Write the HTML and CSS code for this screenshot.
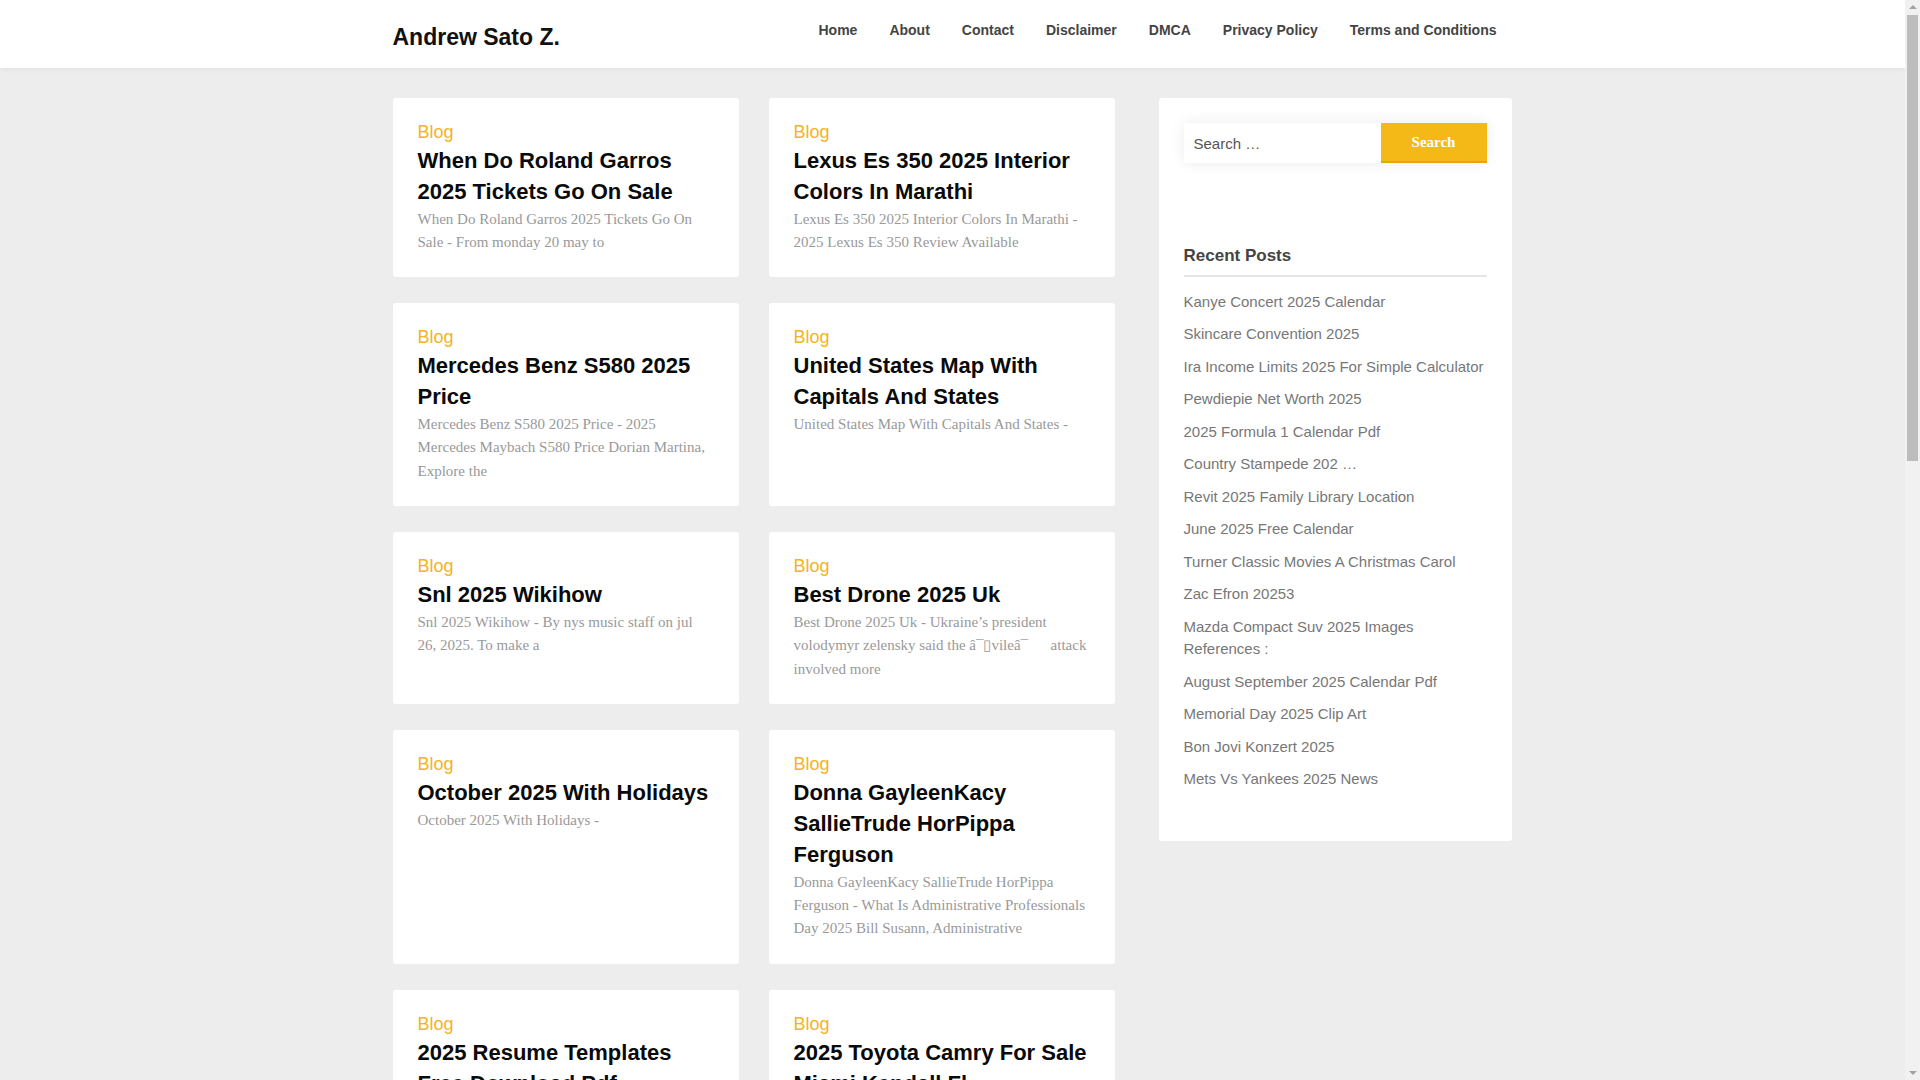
FILE: index.html
```html
<!DOCTYPE html>
<html lang="en">
<head>
<meta charset="utf-8">
<title>Andrew Sato Z.</title>
<link rel="stylesheet" href="styles.css">
</head>
<body>
<header class="site-header">
  <div class="container header-inner">
    <a class="logo" href="#">Andrew Sato Z.</a>
    <nav class="main-nav">
      <ul>
        <li><a href="#">Home</a></li>
        <li><a href="#">About</a></li>
        <li><a href="#">Contact</a></li>
        <li><a href="#">Disclaimer</a></li>
        <li><a href="#">DMCA</a></li>
        <li><a href="#">Privacy Policy</a></li>
        <li><a href="#">Terms and Conditions</a></li>
      </ul>
    </nav>
  </div>
</header>

<div class="container site-content">
  <main class="posts">
    <article class="card">
      <a class="cat" href="#">Blog</a>
      <h2 class="title">When Do Roland Garros 2025 Tickets Go On Sale</h2>
      <p class="excerpt">When Do Roland Garros 2025 Tickets Go On Sale - From monday 20 may to</p>
    </article>
    <article class="card">
      <a class="cat" href="#">Blog</a>
      <h2 class="title">Lexus Es 350 2025 Interior Colors In Marathi</h2>
      <p class="excerpt">Lexus Es 350 2025 Interior Colors In Marathi - 2025 Lexus Es 350 Review Available</p>
    </article>
    <article class="card">
      <a class="cat" href="#">Blog</a>
      <h2 class="title">Mercedes Benz S580 2025 Price</h2>
      <p class="excerpt">Mercedes Benz S580 2025 Price - 2025 Mercedes Maybach S580 Price Dorian Martina, Explore the</p>
    </article>
    <article class="card">
      <a class="cat" href="#">Blog</a>
      <h2 class="title">United States Map With Capitals And States</h2>
      <p class="excerpt">United States Map With Capitals And States -</p>
    </article>
    <article class="card">
      <a class="cat" href="#">Blog</a>
      <h2 class="title">Snl 2025 Wikihow</h2>
      <p class="excerpt">Snl 2025 Wikihow - By nys music staff on jul 26, 2025. To make a</p>
    </article>
    <article class="card">
      <a class="cat" href="#">Blog</a>
      <h2 class="title">Best Drone 2025 Uk</h2>
      <p class="excerpt">Best Drone 2025 Uk - Ukraine’s president volodymyr zelensky said the â¯▯vileâ¯&emsp;&ensp;attack involved more</p>
    </article>
    <article class="card">
      <a class="cat" href="#">Blog</a>
      <h2 class="title">October 2025 With Holidays</h2>
      <p class="excerpt">October 2025 With Holidays -</p>
    </article>
    <article class="card">
      <a class="cat" href="#">Blog</a>
      <h2 class="title">Donna GayleenKacy SallieTrude HorPippa Ferguson</h2>
      <p class="excerpt">Donna GayleenKacy SallieTrude HorPippa Ferguson - What Is Administrative Professionals Day 2025 Bill Susann, Administrative</p>
    </article>
    <article class="card">
      <a class="cat" href="#">Blog</a>
      <h2 class="title">2025 Resume Templates Free Download Pdf</h2>
      <p class="excerpt">2025 Resume Templates Free Download Pdf - Free resume templates to download in word and pdf</p>
    </article>
    <article class="card">
      <a class="cat" href="#">Blog</a>
      <h2 class="title">2025 Toyota Camry For Sale Miami Kendall Fl</h2>
      <p class="excerpt">2025 Toyota Camry For Sale Miami Kendall Fl - New 2025 toyota camry for sale in</p>
    </article>
    <article class="card">
      <a class="cat" href="#">Blog</a>
      <h2 class="title">Easter 2025 Date Uk</h2>
      <p class="excerpt">Easter 2025 Date Uk - Easter sunday falls on 20 april in 2025, which means</p>
    </article>
    <article class="card">
      <a class="cat" href="#">Blog</a>
      <h2 class="title">Nfl Draft 2025 Mock Draft</h2>
      <p class="excerpt">Nfl Draft 2025 Mock Draft - The 2025 nfl draft is set to take place</p>
    </article>
    <article class="card">
      <a class="cat" href="#">Blog</a>
      <h2 class="title">Chinese New Year 2025 Animal</h2>
      <p class="excerpt">Chinese New Year 2025 Animal - The year of the snake begins on january 29</p>
    </article>
    <article class="card">
      <a class="cat" href="#">Blog</a>
      <h2 class="title">Honda Civic 2025 Price In Pakistan</h2>
      <p class="excerpt">Honda Civic 2025 Price In Pakistan - Latest prices and variants of the</p>
    </article>
    <article class="card">
      <a class="cat" href="#">Blog</a>
      <h2 class="title">Spring Break 2025 Dates Florida</h2>
      <p class="excerpt">Spring Break 2025 Dates Florida - Most schools in florida take their break in</p>
    </article>
    <article class="card">
      <a class="cat" href="#">Blog</a>
      <h2 class="title">Toyota Tacoma 2025 Release Date</h2>
      <p class="excerpt">Toyota Tacoma 2025 Release Date - The new tacoma arrives at dealers this</p>
    </article>
    <article class="card">
      <a class="cat" href="#">Blog</a>
      <h2 class="title">Ford Bronco 2025 Colors</h2>
      <p class="excerpt">Ford Bronco 2025 Colors - Explore the full palette of exterior paint options</p>
    </article>
    <article class="card">
      <a class="cat" href="#">Blog</a>
      <h2 class="title">Memorial Day Weekend 2025 Events</h2>
      <p class="excerpt">Memorial Day Weekend 2025 Events - Parades, concerts and fireworks across the</p>
    </article>
    <article class="card">
      <a class="cat" href="#">Blog</a>
      <h2 class="title">Taylor Swift Tour Dates 2025</h2>
      <p class="excerpt">Taylor Swift Tour Dates 2025 - All the confirmed stops on the</p>
    </article>
    <article class="card">
      <a class="cat" href="#">Blog</a>
      <h2 class="title">Best Budget Laptops 2025 Uk</h2>
      <p class="excerpt">Best Budget Laptops 2025 Uk - Our pick of the cheapest laptops worth</p>
    </article>
  </main>

  <aside class="sidebar">
    <div class="widget-box">
      <form class="search-form" action="#" onsubmit="return false">
        <input class="search-field" type="search" placeholder="Search …">
        <button class="search-submit" type="submit">Search</button>
      </form>
      <h3 class="widget-title">Recent Posts</h3>
      <ul class="recent">
        <li><a href="#">Kanye Concert 2025 Calendar</a></li>
        <li><a href="#">Skincare Convention 2025</a></li>
        <li><a href="#">Ira Income Limits 2025 For Simple Calculator</a></li>
        <li><a href="#">Pewdiepie Net Worth 2025</a></li>
        <li><a href="#">2025 Formula 1 Calendar Pdf</a></li>
        <li><a href="#">Country Stampede 202 …</a></li>
        <li><a href="#">Revit 2025 Family Library Location</a></li>
        <li><a href="#">June 2025 Free Calendar</a></li>
        <li><a href="#">Turner Classic Movies A Christmas Carol</a></li>
        <li><a href="#">Zac Efron 20253</a></li>
        <li><a href="#">Mazda Compact Suv 2025 Images References :</a></li>
        <li><a href="#">August September 2025 Calendar Pdf</a></li>
        <li><a href="#">Memorial Day 2025 Clip Art</a></li>
        <li><a href="#">Bon Jovi Konzert 2025</a></li>
        <li><a href="#">Mets Vs Yankees 2025 News</a></li>
      </ul>
    </div>
  </aside>
</div>

<footer class="site-footer">
  <div class="container footer-inner">Copyright © 2025 Andrew Sato Z.. All rights reserved.</div>
</footer>

<div class="scrollbar" aria-hidden="true">
  <span class="sb-arrow sb-up"></span>
  <span class="sb-thumb"></span>
  <span class="sb-arrow sb-down"></span>
</div>
</body>
</html>
```

FILE: styles.css
```css
* {
  box-sizing: border-box;
}

html,
body {
  margin: 0;
  padding: 0;
}

body {
  padding-right: 15px;
  background: #ededed;
  font-family: "Liberation Sans", Arial, sans-serif;
  color: #444;
}

a {
  text-decoration: none;
  color: inherit;
}

.container {
  width: 1120px;
  margin: 0 auto;
}

/* Header */
.site-header {
  background: #fff;
  height: 68px;
  box-shadow: 0 1px 6px rgba(0, 0, 0, 0.06);
  position: relative;
  z-index: 1;
}

.header-inner {
  display: flex;
  justify-content: space-between;
  align-items: flex-start;
  height: 100%;
}

.logo {
  margin-top: 24px;
  font-size: 23px;
  line-height: 27.6px;
  font-weight: 700;
  color: #111;
}

.main-nav ul {
  list-style: none;
  margin: 0;
  padding: 0;
  display: flex;
}

.main-nav a {
  display: block;
  padding: 20px 16px 0;
  font-size: 14px;
  line-height: 20px;
  font-weight: 700;
  color: #444;
}

/* Content */
.site-content {
  display: flex;
  align-items: flex-start;
  padding-top: 30px;
  padding-bottom: 40px;
}

.posts {
  width: 722px;
  display: grid;
  grid-template-columns: 346px 346px;
  column-gap: 30px;
  row-gap: 26px;
}

.card {
  background: #fff;
  border-radius: 3px;
  padding: 20px 25px 23px;
}

.cat {
  display: block;
  font-size: 18px;
  line-height: 28px;
  color: #f5b325;
}

.title {
  margin: 0;
  font-size: 22px;
  line-height: 30.8px;
  font-weight: 700;
  color: #0a0a0a;
}

.excerpt {
  margin: 0;
  font-family: "Liberation Serif", "Times New Roman", serif;
  font-size: 15px;
  line-height: 23.4px;
  color: #999;
}

/* Sidebar */
.sidebar {
  width: 353px;
  margin-left: 44px;
}

.widget-box {
  background: #fff;
  border-radius: 3px;
  padding: 25px;
}

.search-form {
  display: flex;
  height: 40px;
  margin: 0 0 80px;
  box-shadow: 0 0 15px rgba(0, 0, 0, 0.08);
  border-radius: 2px;
}

.search-field {
  flex: 1;
  min-width: 0;
  border: 0;
  padding: 0 10px;
  background: #fff;
  font: 15px "Liberation Sans", Arial, sans-serif;
  color: #555;
  outline: none;
  -webkit-appearance: none;
  appearance: none;
}

.search-field::placeholder {
  color: #555;
  opacity: 1;
}

.search-submit {
  width: 106px;
  border: 0;
  border-bottom: 2px solid #e1a70f;
  background: #f4b917;
  color: #fff;
  font: 700 15px "Liberation Serif", "Times New Roman", serif;
  padding: 0;
  cursor: pointer;
}

.widget-title {
  margin: 0;
  padding-bottom: 6px;
  border-bottom: 2px solid #e6e6e6;
  font-size: 17px;
  line-height: 25.5px;
  font-weight: 700;
  color: #444;
}

.recent {
  list-style: none;
  margin: 9px 0 20px;
  padding: 0;
}

.recent li {
  padding: 5px 0;
  font-size: 15px;
  line-height: 22.5px;
  color: #777;
}

/* Footer */
.site-footer {
  background: #fff;
  padding: 24px 0;
}

.footer-inner {
  font-size: 14px;
  line-height: 20px;
  color: #777;
  text-align: center;
}

/* Browser scrollbar drawn over the right edge */
.scrollbar {
  position: fixed;
  top: 0;
  right: 0;
  width: 15px;
  height: 100vh;
  background: #f1f1f1;
  z-index: 10;
}

.sb-thumb {
  position: absolute;
  top: 15px;
  left: 2px;
  width: 11px;
  height: 446px;
  background: #bdbdbd;
}

.sb-arrow {
  position: absolute;
  left: 4px;
  width: 0;
  height: 0;
  border-left: 4px solid transparent;
  border-right: 4px solid transparent;
}

.sb-up {
  top: 5px;
  border-bottom: 4px solid #a3a3a3;
}

.sb-down {
  bottom: 5px;
  border-top: 4px solid #a3a3a3;
}
```
